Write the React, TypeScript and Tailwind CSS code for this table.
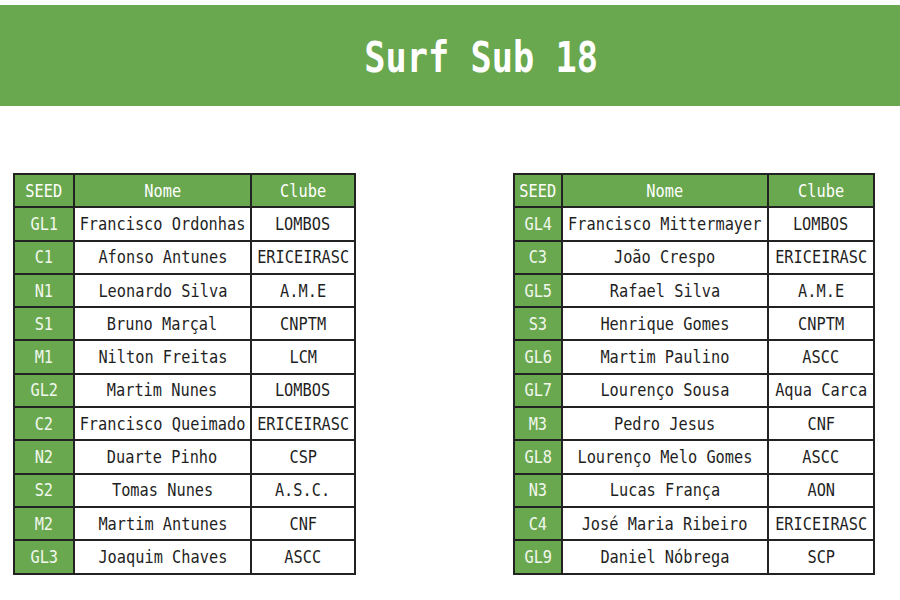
import React from 'react';

type Row = { seed: string; nome: string; clube: string };

const leftRows: Row[] = [
  { seed: 'GL1', nome: 'Francisco Ordonhas', clube: 'LOMBOS' },
  { seed: 'C1', nome: 'Afonso Antunes', clube: 'ERICEIRASC' },
  { seed: 'N1', nome: 'Leonardo Silva', clube: 'A.M.E' },
  { seed: 'S1', nome: 'Bruno Marçal', clube: 'CNPTM' },
  { seed: 'M1', nome: 'Nilton Freitas', clube: 'LCM' },
  { seed: 'GL2', nome: 'Martim Nunes', clube: 'LOMBOS' },
  { seed: 'C2', nome: 'Francisco Queimado', clube: 'ERICEIRASC' },
  { seed: 'N2', nome: 'Duarte Pinho', clube: 'CSP' },
  { seed: 'S2', nome: 'Tomas Nunes', clube: 'A.S.C.' },
  { seed: 'M2', nome: 'Martim Antunes', clube: 'CNF' },
  { seed: 'GL3', nome: 'Joaquim Chaves', clube: 'ASCC' },
];

const rightRows: Row[] = [
  { seed: 'GL4', nome: 'Francisco Mittermayer', clube: 'LOMBOS' },
  { seed: 'C3', nome: 'João Crespo', clube: 'ERICEIRASC' },
  { seed: 'GL5', nome: 'Rafael Silva', clube: 'A.M.E' },
  { seed: 'S3', nome: 'Henrique Gomes', clube: 'CNPTM' },
  { seed: 'GL6', nome: 'Martim Paulino', clube: 'ASCC' },
  { seed: 'GL7', nome: 'Lourenço Sousa', clube: 'Aqua Carca' },
  { seed: 'M3', nome: 'Pedro Jesus', clube: 'CNF' },
  { seed: 'GL8', nome: 'Lourenço Melo Gomes', clube: 'ASCC' },
  { seed: 'N3', nome: 'Lucas França', clube: 'AON' },
  { seed: 'C4', nome: 'José Maria Ribeiro', clube: 'ERICEIRASC' },
  { seed: 'GL9', nome: 'Daniel Nóbrega', clube: 'SCP' },
];

// condensed mono text, the reference font is narrower than DejaVu Sans Mono
const Txt = ({ children }: { children: React.ReactNode }) => (
  <div className="flex justify-center">
    <span className="inline-block shrink-0 scale-x-[0.85] whitespace-nowrap">{children}</span>
  </div>
);

const SeedTable = ({ rows, widths }: { rows: Row[]; widths: [number, number, number] }) => {
  const total = widths[0] + widths[1] + widths[2];
  return (
    <table
      className="table-fixed border-collapse border-2 border-[#444] text-[18px] leading-none"
      style={{ width: total }}
    >
      <colgroup>
        <col style={{ width: widths[0] }} />
        <col style={{ width: widths[1] }} />
        <col style={{ width: widths[2] }} />
      </colgroup>
      <thead>
        <tr className="h-[33.3px] bg-[#6aa84f] text-white">
          <th className="border-2 border-[#222] p-0 font-normal"><Txt>SEED</Txt></th>
          <th className="border-2 border-[#222] p-0 font-normal"><Txt>Nome</Txt></th>
          <th className="border-2 border-[#222] p-0 font-normal"><Txt>Clube</Txt></th>
        </tr>
      </thead>
      <tbody>
        {rows.map((r) => (
          <tr key={r.seed} className="h-[33.3px]">
            <td className="border-2 border-[#222] bg-[#6aa84f] p-0 text-[#f2f8ee]">
              <Txt>{r.seed}</Txt>
            </td>
            <td className="border-2 border-[#222] bg-white p-0 text-[#1f1f1f]">
              <Txt>{r.nome}</Txt>
            </td>
            <td className="border-2 border-[#222] bg-white p-0 text-[#1f1f1f]">
              <Txt>{r.clube}</Txt>
            </td>
          </tr>
        ))}
      </tbody>
    </table>
  );
};

export default function App() {
  return (
    <div className="h-[600px] w-[900px] overflow-hidden bg-white pt-[5px] font-['DejaVu_Sans_Mono',monospace]">
      <header className="flex h-[101px] items-center justify-center bg-[#6aa84f] pl-[62px] pt-[4px]">
        <h1 className="scale-x-[0.84] text-[42px] font-bold leading-none text-white">Surf Sub 18</h1>
      </header>
      <div className="flex items-start pl-[13px] pt-[67px]">
        <SeedTable rows={leftRows} widths={[60, 177, 104]} />
        <div className="ml-[157px]">
          <SeedTable rows={rightRows} widths={[48, 206, 106]} />
        </div>
      </div>
    </div>
  );
}
